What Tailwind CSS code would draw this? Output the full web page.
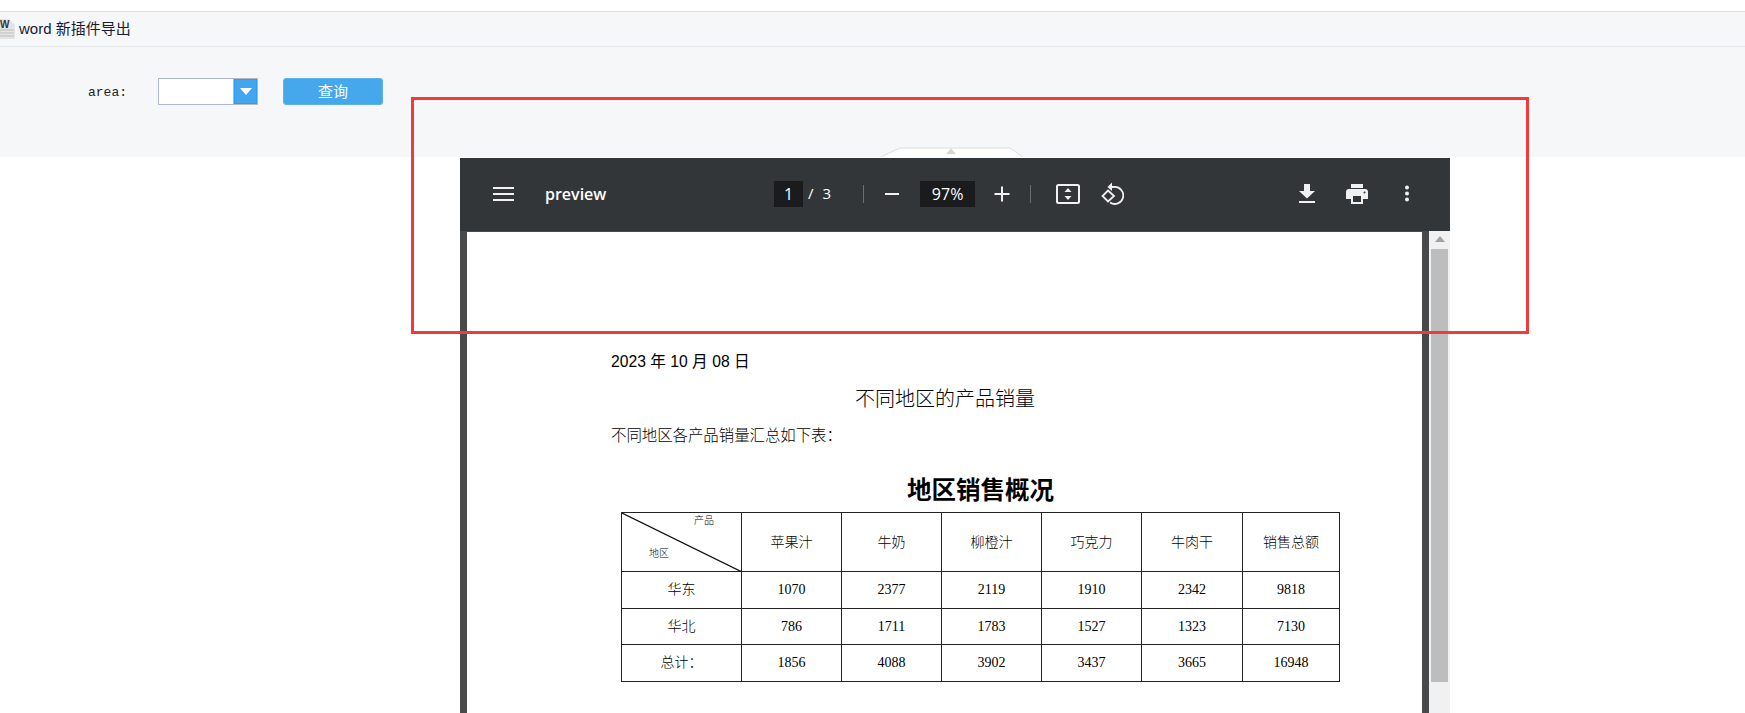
<!DOCTYPE html>
<html><head><meta charset="utf-8"><script src="https://cdn.jsdelivr.net/npm/@tailwindcss/browser@4"></script></head>
<body class="bg-white">
<div class="relative w-[1745px] h-[713px] overflow-hidden bg-white font-['Liberation_Sans','Noto_Sans_CJK_SC',sans-serif]">
  <div class="h-[11px] bg-white border-b border-[#dcdee3] box-content"></div>
  <div class="h-[35px] bg-[#f6f7f9] border-b border-[#e6e8eb] flex items-center">
    <svg width="15" height="20" viewBox="0 0 15 20" class="shrink-0"><path d="M0 0H9L15 6V20H0Z" fill="#e4e4e4"/><path d="M0 11H14M0 14H14M0 17H14" stroke="#bdbdbd"/><text x="0" y="8.5" font-size="10" font-weight="700" font-family="Liberation Sans" fill="#333">W</text></svg>
    <span class="ml-[4px] text-[15px] text-[#1a1a2e]">word 新插件导出</span>
  </div>
  <div class="h-[110px] bg-[#f6f7f9] relative flex items-start pt-[31px]">
    <span class="ml-[88px] w-[40px] text-[13px] leading-[29px] font-['Liberation_Mono',monospace] text-[#222]">area:</span>
    <div class="ml-[30px] w-[100px] h-[27px] flex border border-[#b0b6d0] bg-white">
      <div class="flex-1"></div>
      <div class="w-[23px] h-[25px] bg-[#42a5ee] border border-[#2a9df4] outline outline-[#b8b8b8] flex items-center justify-center">
        <svg width="12" height="7" viewBox="0 0 12 7"><path d="M0 0H12L6 7Z" fill="#fff"/></svg>
      </div>
    </div>
    <button class="ml-[25px] w-[100px] h-[27px] rounded-[3px] bg-[#46a8ec] border border-[#5db1ec] text-white text-[15px] leading-[25px]">查询</button>
    <svg class="absolute left-[880px] top-[100px]" width="143" height="10" viewBox="0 0 143 10"><path d="M0.5 10L20 1H130L143 10" fill="#fff" stroke="#dddddd"/><path d="M71 1.5L66 7H76Z" fill="#d5d5d5"/></svg>
  </div>
  <div class="mt-[1px] ml-[460px] w-[990px] h-[555px] bg-[#47494b] flex flex-col">
    <div class="h-[73px] bg-[#323639] shrink-0 flex items-center text-white pl-[32px] pb-[2px] relative">
      <svg width="22" height="16" viewBox="0 0 22 16" class="shrink-0"><path d="M1 2H22M1 8H22M1 14H22" stroke="#f1f1f1" stroke-width="2"/></svg>
      <span class="ml-[31px] text-[16px] font-semibold font-['Open_Sans',sans-serif] w-[226px]">preview</span>
      <div class="ml-[3px] w-[29px] h-[26px] bg-[#191b1c] flex items-center justify-center text-[16px] font-['Open_Sans',sans-serif]">1</div>
      <span class="ml-[5px] text-[15px] font-['Open_Sans',sans-serif]">/</span>
      <span class="ml-[9px] text-[15px] font-['Open_Sans',sans-serif]">3</span>
      <div class="ml-[32px] w-px h-[18px] bg-[#6b6e70]"></div>
      <svg class="ml-[20px]" width="16" height="16" viewBox="0 0 16 16"><path d="M1 8H15" stroke="#f1f1f1" stroke-width="2"/></svg>
      <div class="ml-[20px] w-[55px] h-[26px] bg-[#191b1c] flex items-center justify-center text-[16px] font-['Open_Sans',sans-serif]">97%</div>
      <svg class="ml-[19px]" width="16" height="16" viewBox="0 0 16 16"><path d="M0.5 8H15.5M8 0.5V15.5" stroke="#f1f1f1" stroke-width="2"/></svg>
      <div class="ml-[20px] w-px h-[18px] bg-[#6b6e70]"></div>
      <svg class="ml-[25px]" width="24" height="20" viewBox="0 0 24 20"><rect x="1" y="1" width="22" height="18" rx="1.5" fill="none" stroke="#f1f1f1" stroke-width="2"/><path d="M12 4L8.5 8H15.5ZM12 16L8.5 12H15.5Z" fill="#f1f1f1"/></svg>
      <svg class="ml-[21px]" width="23" height="23" viewBox="0 0 23 23"><path d="M8 5H13A8.5 8.5 0 1 1 9 20.5" fill="none" stroke="#f1f1f1" stroke-width="1.8"/><path d="M11 0.5V9L6.5 5Z" fill="#f1f1f1"/><path d="M7 8.5L13 14L7 19.5L1.5 14Z" fill="none" stroke="#f1f1f1" stroke-width="1.8"/></svg>
      <svg class="ml-[175px]" width="16" height="19" viewBox="0 0 16 19"><path d="M5 0H11V7H16L8 14.5L0 7H5ZM0 17H16V19H0Z" fill="#f1f1f1"/></svg>
      <svg class="ml-[31px]" width="22" height="20" viewBox="0 0 22 20"><path d="M5 0H17V4H5ZM3 5H19A3 3 0 0 1 22 8V15H17V20H5V15H0V8A3 3 0 0 1 3 5ZM7 12V18H15V12Z" fill="#f1f1f1" fill-rule="evenodd"/><circle cx="18.5" cy="8.5" r="1" fill="#323639"/></svg>
      <svg class="ml-[36px]" width="6" height="17" viewBox="0 0 6 17"><circle cx="3" cy="2.5" r="2" fill="#f1f1f1"/><circle cx="3" cy="8.5" r="2" fill="#f1f1f1"/><circle cx="3" cy="14.5" r="2" fill="#f1f1f1"/></svg>
    </div>
    <div class="flex flex-1 min-h-0">
      <div class="ml-[7px] mt-[1px] w-[955px] bg-white relative pt-[120px] text-black overflow-hidden">
        <p class="ml-[144px] text-[15.7px] leading-[20px] font-['Liberation_Sans','Noto_Sans_CJK_SC',sans-serif]">2023 年 10 月 08 日</p>
        <p class="ml-[388px] mt-[14px] text-[20px] leading-[26px] font-light">不同地区的产品销量</p>
        <p class="ml-[144px] mt-[14px] text-[15.4px] leading-[20px] font-light">不同地区各产品销量汇总如下表：</p>
        <p class="ml-[440px] mt-[29px] text-[24.5px] leading-[32px] font-bold">地区销售概况</p>
        <table class="ml-[154px] mt-[5px] w-[718px] table-fixed border-collapse text-[14px] text-center font-light font-['Liberation_Serif','Noto_Sans_CJK_SC',serif] [&_td]:border [&_td]:border-[#222]">
          <colgroup><col class="w-[120px]"><col class="w-[100px]"><col class="w-[100px]"><col class="w-[100px]"><col class="w-[100px]"><col class="w-[101px]"><col class="w-[97px]"></colgroup>
          <tr class="h-[59px]">
            <td class="relative p-0 text-[10px]">
              <svg class="absolute inset-0" width="120" height="59" viewBox="0 0 120 59"><path d="M0 0L120 59" stroke="#111" stroke-width="1.2"/></svg>
              <span class="absolute left-[72px] top-0">产品</span><span class="absolute left-[27px] top-[33px]">地区</span>
            </td>
            <td>苹果汁</td><td>牛奶</td><td>柳橙汁</td><td>巧克力</td><td>牛肉干</td><td>销售总额</td>
          </tr>
          <tr class="h-[36.5px]"><td>华东</td><td>1070</td><td>2377</td><td>2119</td><td>1910</td><td>2342</td><td>9818</td></tr>
          <tr class="h-[36.5px]"><td>华北</td><td>786</td><td>1711</td><td>1783</td><td>1527</td><td>1323</td><td>7130</td></tr>
          <tr class="h-[36.5px]"><td>总计：</td><td>1856</td><td>4088</td><td>3902</td><td>3437</td><td>3665</td><td>16948</td></tr>
        </table>
      </div>
      <div class="ml-[7px] -mt-[4px] w-[21px] bg-[#f1f1f1] flex flex-col items-center pt-[9px]">
        <svg width="10" height="6" viewBox="0 0 10 6" class="shrink-0"><path d="M5 0L10 6H0Z" fill="#a3a3a3"/></svg>
        <div class="mt-[7px] w-[17px] h-[433px] bg-[#bdbdbd]"></div>
      </div>
    </div>
  </div>
  <div class="absolute left-[411px] top-[97px] w-[1118px] h-[237px] border-[3px] border-[#f13a3a]"></div>
</div>
</body></html>
